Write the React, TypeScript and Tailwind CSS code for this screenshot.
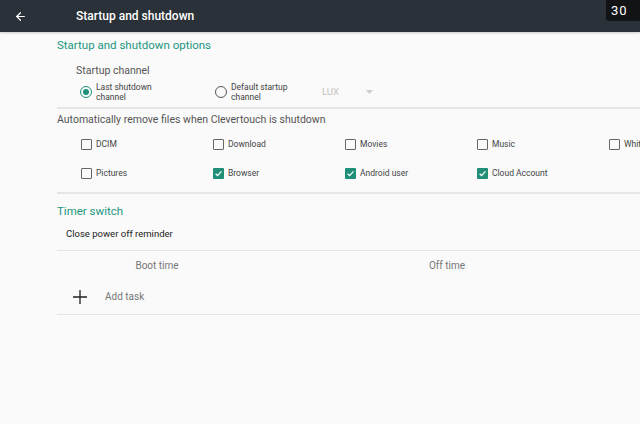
import { ArrowLeft } from "lucide-react";

const files = [
  { name: "DCIM", on: false },
  { name: "Download", on: false },
  { name: "Movies", on: false },
  { name: "Music", on: false },
  { name: "WhiteBoard", on: false },
  { name: "Pictures", on: false },
  { name: "Browser", on: true },
  { name: "Android user", on: true },
  { name: "Cloud Account", on: true },
];

function Check({ on }: { on: boolean }) {
  if (on) {
    return (
      <span className="w-[11px] h-[11px] rounded-[1px] bg-[#1f8f78] flex items-center justify-center shrink-0">
        <svg width="9" height="9" viewBox="0 0 10 10" fill="none">
          <path d="M1.8 5.2 L4 7.3 L8.3 2.6" stroke="white" strokeWidth="1.4" />
        </svg>
      </span>
    );
  }
  return <span className="w-[11px] h-[11px] rounded-[1px] border-[1.5px] border-[#666] shrink-0" />;
}

function Radio({ on }: { on: boolean }) {
  return (
    <span
      className={`w-[12px] h-[12px] rounded-full border-[1.5px] flex items-center justify-center shrink-0 ${
        on ? "border-[#1f8f78]" : "border-[#555]"
      }`}
    >
      {on && <span className="w-[6px] h-[6px] rounded-full bg-[#1f8f78]" />}
    </span>
  );
}

export default function App() {
  return (
    <div
      className="w-[640px] h-[424px] bg-[#fafafa] overflow-hidden"
      style={{ fontFamily: "Roboto, 'Liberation Sans', sans-serif" }}
    >
      <div className="h-[32px] bg-[#2b3138] flex items-center relative shadow-[0_1px_2px_rgba(0,0,0,0.2)]">
        <ArrowLeft size={13} strokeWidth={2.2} className="text-white ml-[14px]" />
        <span className="ml-[49px] text-white text-[12px] font-medium">Startup and shutdown</span>
        <div className="absolute right-0 top-0 h-[21px] w-[34px] bg-[#111315] rounded-bl-[3px] text-white text-[13px] tracking-[1px] pl-[5px] leading-[21px]">
          30
        </div>
      </div>

      <div className="pl-[57px]">
        <div className="text-[#21967f] text-[11.5px] pt-[5px] h-[24px] leading-[16px]">
          Startup and shutdown options
        </div>

        <div className="pl-[19px] pt-[8px] text-[#555] text-[10.5px] leading-[13px]">Startup channel</div>

        <div className="flex items-center h-[26px] mt-[2px] pl-[23px] text-[#444] text-[8.5px] leading-[10px]">
          <div className="flex items-center gap-[4px] w-[135px]">
            <Radio on />
            <span>
              Last shutdown
              <br />
              channel
            </span>
          </div>
          <div className="flex items-center gap-[4px] w-[107px]">
            <Radio on={false} />
            <span>
              Default startup
              <br />
              channel
            </span>
          </div>
          <span className="text-[#c4c4c4] text-[9.5px] w-[44px]">LUX</span>
          <svg width="7" height="4" viewBox="0 0 7 4">
            <path d="M0 0 L7 0 L3.5 4 Z" fill="#ccc" />
          </svg>
        </div>

        <div className="h-[2px] bg-[#e6e6e6] mt-[2px]" />

        <div className="text-[#555] text-[10.5px] pt-[4px] h-[21px] leading-[13px]">
          Automatically remove files when Clevertouch is shutdown
        </div>

        <div className="grid grid-cols-[132px_132px_132px_132px_132px] pl-[24px] w-[700px]">
          {files.map((f) => (
            <div key={f.name} className="flex items-center gap-[4px] h-[29px] text-[#444] text-[8.5px]">
              <Check on={f.on} />
              <span>{f.name}</span>
            </div>
          ))}
        </div>

        <div className="h-[2px] bg-[#e6e6e6] mt-[4px]" />

        <div className="text-[#21967f] text-[11.5px] pt-[10px] leading-[14px]">Timer switch</div>
        <div className="text-[#222] text-[9.5px] pl-[9px] pt-[10px] h-[32px] leading-[12px]">Close power off reminder</div>

        <div className="h-[1px] bg-[#e4e4e4]" />

        <div className="flex text-[#777] text-[10px] h-[28px] items-center">
          <span className="w-[200px] text-center">Boot time</span>
          <span className="w-[380px] text-center">Off time</span>
        </div>

        <div className="flex items-center h-[35px] pl-[15px]">
          <svg width="16" height="16" viewBox="0 0 16 16">
            <path d="M8 1 V15 M1 8 H15" stroke="#222" strokeWidth="1.3" />
          </svg>
          <span className="ml-[17px] text-[#777] text-[10px]">Add task</span>
        </div>

        <div className="h-[1px] bg-[#e4e4e4]" />
      </div>
    </div>
  );
}
